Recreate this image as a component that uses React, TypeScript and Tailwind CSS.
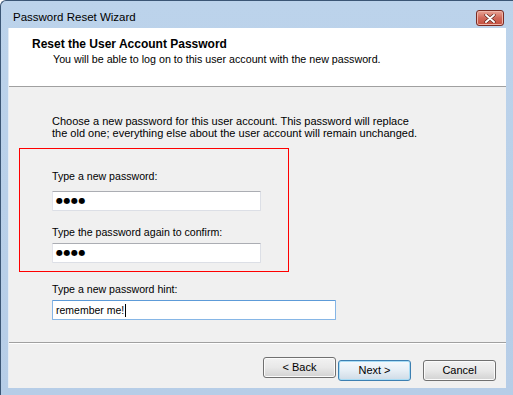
import React from "react";

const font = { fontFamily: '"Liberation Sans", Arial, sans-serif' };

function TextBox({ children, w, focused }: { children?: React.ReactNode; w: string; focused?: boolean }) {
  return (
    <div
      className={`${w} h-[20px] bg-white border flex items-center pl-[3px] rounded-[1px] ${
        focused
          ? "border-[#86b6e6] border-t-[#5d9bd8]"
          : "border-[#dcdfe6] border-t-[#abadb3] border-l-[#e2e3ea]"
      }`}
    >
      {children}
    </div>
  );
}

function Bullets() {
  return (
    <span className="text-[8px] leading-[10px] tracking-[0.5px] text-black" style={{ fontFamily: '"DejaVu Sans", sans-serif' }}>
      ●●●●
    </span>
  );
}

function Btn({ children, def }: { children: React.ReactNode; def?: boolean }) {
  return (
    <button
      className={`w-[73px] h-[21px] rounded-[3px] border text-[11px] leading-[19px] text-black ${
        def
          ? "border-[#3c7fb1] bg-gradient-to-b from-[#f4f9fd] via-[#e6eef5] to-[#cfdbe6] shadow-[inset_0_0_0_1px_#a8dcf5]"
          : "border-[#707070] bg-gradient-to-b from-[#f2f2f2] via-[#e8e8e8] to-[#d2d2d2] shadow-[inset_0_0_0_1px_#fbfbfb]"
      }`}
      style={font}
    >
      {children}
    </button>
  );
}

export default function App() {
  return (
    <div
      className="w-[513px] h-[395px] flex flex-col overflow-hidden border-l border-t border-[#3b5675] rounded-tl-[6px] bg-gradient-to-b from-[#bcd3eb] to-[#b6cde7] text-black"
      style={font}
    >
      {/* Title bar */}
      <div className="h-[27px] flex items-start justify-between pl-[12px] pr-[9px] shrink-0">
        <div className="mt-[9px] text-[11.5px] leading-[14px] text-[#000]">Password Reset Wizard</div>
        <div className="mt-[9px] w-[28px] h-[16px] rounded-[3px] border border-[#7a2b23] bg-gradient-to-b from-[#e8a496] via-[#d0685a] to-[#c44f3e] shadow-[inset_0_0_0_1px_#eeb4a8] flex items-center justify-center">
          <svg width="12" height="9" viewBox="0 0 12 9">
            <path d="M2 1 L10 8 M10 1 L2 8" stroke="#5a2018" strokeWidth="3.2" strokeLinecap="round" />
            <path d="M2 1 L10 8 M10 1 L2 8" stroke="#ffffff" strokeWidth="1.9" strokeLinecap="round" />
          </svg>
        </div>
      </div>

      {/* Client area */}
      <div className="mx-[7px] mb-[7px] flex-1 flex flex-col bg-[#f0f0f0] border-l border-[#e4ecf5]">
        {/* Header */}
        <div className="h-[59px] shrink-0 bg-white border-b border-[#a0a0a0] pt-[10px] pl-[23px]">
          <div className="text-[12px] leading-[13px] font-bold">Reset the User Account Password</div>
          <div className="mt-[2px] pl-[21px] text-[10.7px] leading-[13px]">
            You will be able to log on to this user account with the new password.
          </div>
        </div>

        {/* Body */}
        <div className="flex-1 flex flex-col">
          <div className="pt-[28px] pl-[43px] text-[11px] leading-[12px]">
            <p>Choose a new password for this user account. This password will replace</p>
            <p>the old one; everything else about the user account will remain unchanged.</p>
          </div>

          <div className="mt-[9px] ml-[10px] w-[270px] h-[124px] border border-[#ff0000] pt-[21px] pl-[32px] text-[10.6px]">
            <div className="leading-[13px]">Type a new password:</div>
            <div className="mt-[8px]">
              <TextBox w="w-[209px]">
                <Bullets />
              </TextBox>
            </div>
            <div className="mt-[15px] leading-[13px]">Type the password again to confirm:</div>
            <div className="mt-[4px]">
              <TextBox w="w-[209px]">
                <Bullets />
              </TextBox>
            </div>
          </div>

          <div className="mt-[11px] pl-[43px] text-[10.6px]">
            <div className="leading-[13px]">Type a new password hint:</div>
            <div className="mt-[4px]">
              <TextBox w="w-[284px]" focused>
                <span className="text-[10.5px] leading-[13px]">remember me!</span>
                <span className="ml-[1px] w-[1px] h-[13px] bg-black" />
              </TextBox>
            </div>
          </div>

          <div className="mt-[22px] h-[2px] border-t border-[#a0a0a0] border-b border-b-[#ffffff]" />

          <div className="mt-[13px] flex justify-end pr-[10px]">
            <Btn>&lt; Back</Btn>
            <div className="ml-[2px]">
              <Btn def>Next &gt;</Btn>
            </div>
            <div className="ml-[12px]">
              <Btn>Cancel</Btn>
            </div>
          </div>
        </div>
      </div>
    </div>
  );
}
